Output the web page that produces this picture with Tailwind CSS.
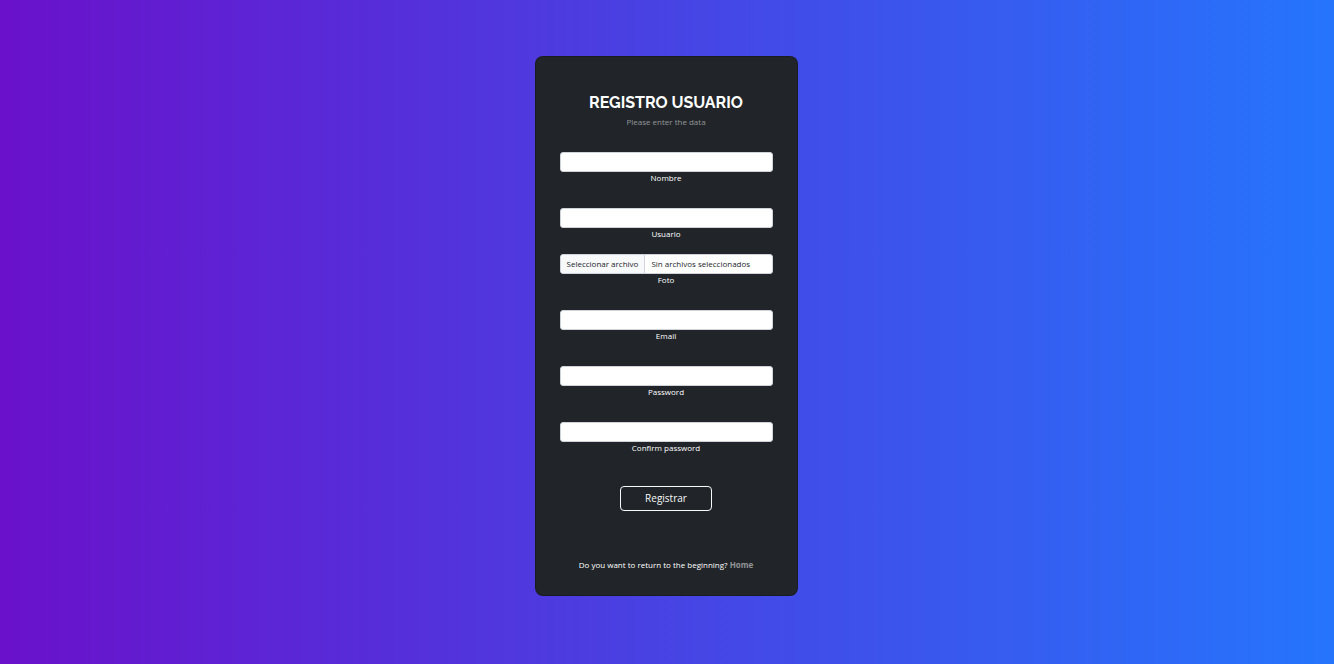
<!DOCTYPE html>
<html lang="es">
<head>
<meta charset="utf-8">
<meta name="viewport" content="width=device-width, initial-scale=1">
<title>Registro usuario</title>
<script src="https://cdn.jsdelivr.net/npm/@tailwindcss/browser@4"></script>
</head>
<body class="min-h-screen bg-linear-to-r/srgb from-[#6a11cb] to-[#2575fc] font-['Open_Sans',sans-serif] text-[8px] leading-3 text-white">
<main class="flex min-h-screen items-start justify-center pt-14 pr-3.5 pb-14 pl-3">
<section class="w-full max-w-[263px] rounded-lg border border-black/20 bg-[#212529] px-6 pt-9 pb-6 text-center">
<h1 class="font-['Raleway','Lato',sans-serif] text-base leading-5 font-bold uppercase">Registro Usuario</h1>
<p class="mt-[3px] text-white/50">Please enter the data</p>
<form class="mt-6">
<div class="mb-6"><input id="nombre" type="text" class="block h-5 w-full rounded-[3px] border border-[#ced4da] bg-white px-1.5 text-[#212529]"><label for="nombre" class="block">Nombre</label></div>
<div class="mb-3.5"><input id="usuario" type="text" class="block h-5 w-full rounded-[3px] border border-[#ced4da] bg-white px-1.5 text-[#212529]"><label for="usuario" class="block">Usuario</label></div>
<div class="mb-6"><label class="relative flex h-5 w-full cursor-pointer items-stretch overflow-hidden rounded-[3px] border border-[#ced4da] bg-white text-left leading-[18px] text-[#212529]"><input id="foto" type="file" class="sr-only"><span class="border-r border-[#ced4da] bg-[#f8f9fa] px-1.5">Seleccionar archivo</span><span class="px-1.5">Sin archivos seleccionados</span></label><label for="foto" class="block">Foto</label></div>
<div class="mb-6"><input id="email" type="email" class="block h-5 w-full rounded-[3px] border border-[#ced4da] bg-white px-1.5 text-[#212529]"><label for="email" class="block">Email</label></div>
<div class="mb-6"><input id="password" type="password" class="block h-5 w-full rounded-[3px] border border-[#ced4da] bg-white px-1.5 text-[#212529]"><label for="password" class="block">Password</label></div>
<div class="mb-8"><input id="confirm" type="password" class="block h-5 w-full rounded-[3px] border border-[#ced4da] bg-white px-1.5 text-[#212529]"><label for="confirm" class="block">Confirm password</label></div>
<button type="submit" class="h-[25px] rounded border border-[#f8f9fa] px-6 pb-0.5 text-[10px] leading-4 text-[#f8f9fa]">Registrar</button>
</form>
<p class="mt-12">Do you want to return to the beginning? <a href="#" class="font-bold text-white/50">Home</a></p>
</section>
</main>
</body>
</html>
